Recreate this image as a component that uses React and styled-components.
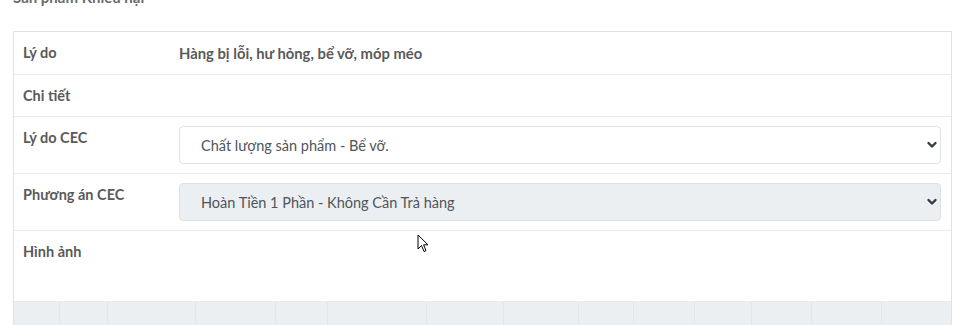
import React from "react";
import styled, { createGlobalStyle } from "styled-components";

const Global = createGlobalStyle`
  html, body { margin: 0; padding: 0; background: #fff; }
  body { font-family: Lato, "Noto Sans", sans-serif; color: #5a5a5a; overflow: hidden; }
`;

const Page = styled.div`
  position: relative;
  display: flow-root;
  width: 939px;
  padding-left: 13px;
`;

const Heading = styled.div`
  margin-top: -12px;
  height: 43px;
  font-size: 15px;
  font-weight: 700;
  line-height: 18px;
  color: #6b6b6b;
`;

const Table = styled.div`
  border: 1px solid #dfe2e5;
  border-bottom: none;
  display: flex;
  flex-direction: column;
`;

const Row = styled.div`
  display: grid;
  grid-template-columns: 165px 1fr;
  border-bottom: 1px solid #e9ecef;
  min-height: ${(p) => p.$h || 0}px;
`;

const Label = styled.div`
  padding: 12px 9px 11px;
  font-size: 14.5px;
  font-weight: 700;
  line-height: 18px;
  color: #5a5a5a;
`;

const Value = styled.div`
  padding: ${(p) => (p.$field ? "9px 10px 9px 0" : "12px 0")};
  font-size: 14.8px;
  font-weight: 700;
  line-height: 18px;
  color: #5a5a5a;
`;

const SelectWrap = styled.div`
  position: relative;
`;

const Select = styled.select`
  appearance: none;
  -webkit-appearance: none;
  display: block;
  width: 100%;
  height: 38px;
  box-sizing: border-box;
  padding: 0 30px 0 21px;
  border: 1px solid #dde2e6;
  border-radius: 4px;
  background: ${(p) => (p.$disabled ? "#eceff1" : "#fff")};
  font-family: Lato, "Noto Sans", sans-serif;
  font-size: 14.5px;
  color: #4f555b;
  outline: none;
`;

const Chevron = styled.svg`
  position: absolute;
  right: 1px;
  top: 50%;
  transform: translateY(-50%);
  pointer-events: none;
`;

const Footer = styled.div`
  display: grid;
  grid-template-columns: 46px 48px 88px 80px 52px 99px 77px 75px 55px 61px 57px 60px 70px 1fr;
  background: #eceff1;
  height: 30px;
`;

const FooterCell = styled.div`
  border-right: 1px solid #e4e7e9;
  &:last-child { border-right: none; }
`;

const Cursor = styled.svg`
  position: absolute;
  left: 417px;
  top: 234px;
`;

function SelectField({ value, disabled }) {
  return (
    <SelectWrap>
      <Select $disabled={disabled} defaultValue={value}>
        <option>{value}</option>
      </Select>
      <Chevron width="16" height="12" viewBox="0 0 16 12">
        <path d="M4.5 4 L8 7.5 L11.5 4" fill="none" stroke="#343a40" strokeWidth="2.4" strokeLinecap="round" strokeLinejoin="round" />
      </Chevron>
    </SelectWrap>
  );
}

export default function App() {
  return (
    <>
      <Global />
      <Page>
        <Heading>Sản phẩm Khiếu nại</Heading>
        <Table>
          <Row>
            <Label>Lý do</Label>
            <Value>Hàng bị lỗi, hư hỏng, bể vỡ, móp méo</Value>
          </Row>
          <Row>
            <Label>Chi tiết</Label>
            <Value></Value>
          </Row>
          <Row>
            <Label>Lý do CEC</Label>
            <Value $field>
              <SelectField value="Chất lượng sản phẩm - Bể vỡ." />
            </Value>
          </Row>
          <Row>
            <Label>Phương án CEC</Label>
            <Value $field>
              <SelectField value="Hoàn Tiền 1 Phần - Không Cần Trả hàng" disabled />
            </Value>
          </Row>
          <Row $h={70}>
            <Label>Hình ảnh</Label>
            <Value></Value>
          </Row>
          <Footer>
            {Array.from({ length: 14 }).map((_, i) => (
              <FooterCell key={i} />
            ))}
          </Footer>
        </Table>
        <Cursor width="12" height="20" viewBox="0 0 12 20">
          <path d="M1 1 L1 15 L4.5 11.5 L7 17.5 L9 16.6 L6.6 10.8 L11 10.8 Z" fill="#fff" stroke="#000" strokeWidth="1" strokeLinejoin="round" />
        </Cursor>
      </Page>
    </>
  );
}
